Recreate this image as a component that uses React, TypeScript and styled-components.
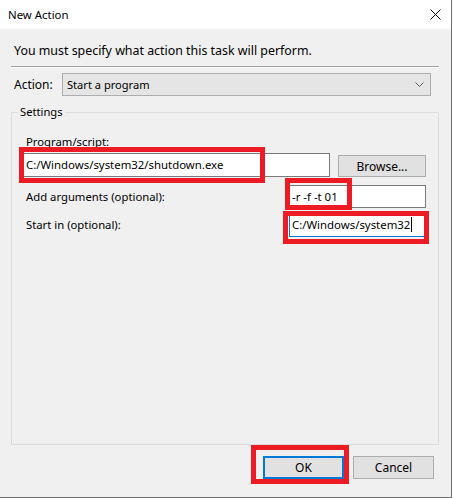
import React from "react";
import styled, { createGlobalStyle } from "styled-components";

const GlobalStyle = createGlobalStyle`
  html, body {
    margin: 0;
    padding: 0;
    background: #ffffff;
  }
  * {
    box-sizing: border-box;
  }
`;

const Window = styled.div`
  width: 452px;
  height: 498px;
  display: flex;
  flex-direction: column;
  background: #f0f0f0;
  border-right: 1px solid #6e6e6e;
  border-bottom: 1px solid #6e6e6e;
  font-family: "Segoe UI", "Noto Sans", sans-serif;
  font-size: 11.3px;
  line-height: 16px;
  color: #000;
`;

const TitleBar = styled.div`
  height: 29px;
  flex: none;
  display: flex;
  align-items: center;
  justify-content: space-between;
  padding: 0 10px 0 8px;
  background: #ffffff;
`;

const Title = styled.span`
  font-size: 11.4px;
`;

const Body = styled.div`
  flex: 1;
  display: flex;
  flex-direction: column;
  padding: 14px 12px 0 11px;
`;

const Intro = styled.div`
  padding-left: 3px;
  font-size: 12.4px;
`;

const Separator = styled.div`
  margin-top: 7px;
  height: 2px;
  border-top: 1px solid #a0a0a0;
  border-bottom: 1px solid #ffffff;
`;

const ActionRow = styled.div`
  margin-top: 5px;
  display: flex;
  align-items: center;
  padding-left: 3px;
  font-size: 12px;
`;

const ActionLabel = styled.span`
  width: 48px;
`;

const Dropdown = styled.div`
  width: 369px;
  height: 23px;
  display: flex;
  align-items: center;
  justify-content: space-between;
  padding: 0 6px 0 4px;
  background: #e5e5e5;
  border: 1px solid #adadad;
  font-size: 11.1px;
`;

const Group = styled.fieldset`
  flex: 1;
  margin: 8px 0 0 0;
  padding: 14px 12px 0 11px;
  border: 1px solid #dcdcdc;
  display: flex;
  flex-direction: column;
  min-height: 0;
`;

const Legend = styled.legend`
  margin-left: -5px;
  padding: 0 2px;
  line-height: 16px;
  font-size: 11.2px;
`;

const FieldLabel = styled.span<{ $grow?: boolean }>`
  padding-left: 3px;
  flex: ${(p) => (p.$grow ? 1 : "none")};
`;

const ProgramRow = styled.div`
  margin-top: 3px;
  display: flex;
  align-items: flex-end;
  gap: 8px;
`;

const ArgRow = styled.div<{ $top: number }>`
  margin-top: ${(p) => p.$top}px;
  display: flex;
  align-items: center;
`;

const Marked = styled.div`
  position: relative;
  display: flex;
`;

const RedFrame = styled.div<{ $l: number; $t: number; $w: number; $h: number }>`
  position: absolute;
  left: ${(p) => p.$l}px;
  top: ${(p) => p.$t}px;
  width: ${(p) => p.$w}px;
  height: ${(p) => p.$h}px;
  border: 5px solid #ed1c24;
  pointer-events: none;
`;

const TextField = styled.div<{ $w: number; $h: number; $focused?: boolean }>`
  width: ${(p) => p.$w}px;
  height: ${(p) => p.$h}px;
  display: flex;
  align-items: center;
  padding-left: 2px;
  font-size: 11.4px;
  background: #ffffff;
  border: 1px solid ${(p) => (p.$focused ? "#0078d7" : "#7a7a7a")};
  white-space: nowrap;
  overflow: hidden;
`;

const Caret = styled.span`
  display: inline-block;
  width: 1px;
  height: 15px;
  margin-left: 1px;
  background: #000;
`;

const Button = styled.button<{ $default?: boolean }>`
  width: 81px;
  height: 23px;
  padding: 0;
  font-family: inherit;
  font-size: 12px;
  color: #000;
  background: #e1e1e1;
  border: 1px solid ${(p) => (p.$default ? "#0078d7" : "#adadad")};
  box-shadow: ${(p) => (p.$default ? "inset 0 0 0 1px #0078d7" : "none")};
`;

const BrowseButton = styled(Button)`
  width: 88px;
  height: 22px;
`;

const Footer = styled.div`
  height: 52px;
  flex: none;
  display: flex;
  justify-content: flex-end;
  align-items: flex-start;
  gap: 9px;
  padding: 11px 17px 0 0;
`;

function CloseIcon() {
  return (
    <svg width="11" height="11" viewBox="0 0 11 11">
      <path d="M0.5 0.5 L10.5 10.5 M10.5 0.5 L0.5 10.5" stroke="#000" strokeWidth="1" />
    </svg>
  );
}

function Chevron() {
  return (
    <svg width="9" height="5" viewBox="0 0 9 5">
      <path d="M0.5 0.5 L4.5 4.5 L8.5 0.5" fill="none" stroke="#606060" strokeWidth="1" />
    </svg>
  );
}

export default function App() {
  return (
    <>
      <GlobalStyle />
      <Window>
        <TitleBar>
          <Title>New Action</Title>
          <CloseIcon />
        </TitleBar>
        <Body>
          <Intro>You must specify what action this task will perform.</Intro>
          <Separator />
          <ActionRow>
            <ActionLabel>Action:</ActionLabel>
            <Dropdown>
              <span>Start a program</span>
              <Chevron />
            </Dropdown>
          </ActionRow>
          <Group>
            <Legend>Settings</Legend>
            <FieldLabel>Program/script:</FieldLabel>
            <ProgramRow>
              <Marked>
                <TextField $w={307} $h={24}>C:/Windows/system32/shutdown.exe</TextField>
                <RedFrame $l={-4} $t={-6} $w={246} $h={36} />
              </Marked>
              <BrowseButton>Browse...</BrowseButton>
            </ProgramRow>
            <ArgRow $top={8}>
              <FieldLabel $grow>Add arguments (optional):</FieldLabel>
              <Marked>
                <TextField $w={137} $h={23}>-r -f -t 01</TextField>
                <RedFrame $l={-4} $t={-7} $w={67} $h={32} />
              </Marked>
            </ArgRow>
            <ArgRow $top={4}>
              <FieldLabel $grow>Start in (optional):</FieldLabel>
              <Marked>
                <TextField $w={137} $h={25} $focused>
                  C:/Windows/system32
                  <Caret />
                </TextField>
                <RedFrame $l={-6} $t={-1} $w={146} $h={33} />
              </Marked>
            </ArgRow>
          </Group>
        </Body>
        <Footer>
          <Marked>
            <Button $default>OK</Button>
            <RedFrame $l={-12} $t={-11} $w={98} $h={39} />
          </Marked>
          <Button>Cancel</Button>
        </Footer>
      </Window>
    </>
  );
}
